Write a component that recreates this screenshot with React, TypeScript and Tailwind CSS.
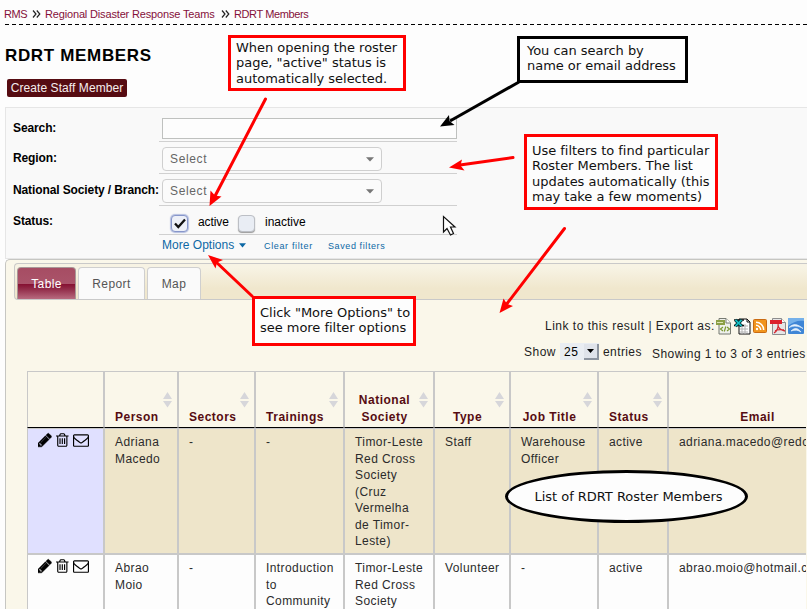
import React from 'react';

type Column = { title: string; width: string };

const columns: Column[] = [
  { title: 'Person', width: 'w-[74px]' },
  { title: 'Sectors', width: 'w-[77px]' },
  { title: 'Trainings', width: 'w-[89px]' },
  { title: 'National Society', width: 'w-[90px]' },
  { title: 'Type', width: 'w-[76px]' },
  { title: 'Job Title', width: 'w-[88px]' },
  { title: 'Status', width: 'w-[70px]' },
  { title: 'Email', width: 'w-[188px]' },
];

const rows: string[][] = [
  ['Adriana Macedo', '-', '-', 'Timor-Leste Red Cross Society (Cruz Vermelha de Timor-Leste)', 'Staff', 'Warehouse Officer', 'active', 'adriana.macedo@redcross.tl'],
  ['Abrao Moio', '-', 'Introduction to Community', 'Timor-Leste Red Cross Society', 'Volunteer', '-', 'active', 'abrao.moio@hotmail.com'],
];

function RowActions() {
  return (
    <div className="flex h-4 items-center gap-[4.5px] pl-px">
      <svg className="h-4 w-[13.7px]" viewBox="128 0 1536 1792">
        <path stroke="#000" strokeWidth="50" d="M491 1536l91-91-235-235-91 91v107h128v128h107zm523-928q0-22-22-22-10 0-17 7l-542 542q-7 7-7 17 0 22 22 22 10 0 17-7l542-542q7-7 7-17zm-54-192l416 416-832 832h-416v-416zm683 96q0 53-37 90l-166 166-416-416 166-165q36-38 90-38 53 0 91 38l235 234q37 39 37 91z" />
      </svg>
      <svg className="h-4 w-[12.6px]" viewBox="192 0 1408 1792">
        <path d="M704 736v576q0 14-9 23t-23 9h-64q-14 0-23-9t-9-23v-576q0-14 9-23t23-9h64q14 0 23 9t9 23zm256 0v576q0 14-9 23t-23 9h-64q-14 0-23-9t-9-23v-576q0-14 9-23t23-9h64q14 0 23 9t9 23zm256 0v576q0 14-9 23t-23 9h-64q-14 0-23-9t-9-23v-576q0-14 9-23t23-9h64q14 0 23 9t9 23zm128 724v-948h-896v948q0 22 7 40.5t14.5 27 10.5 8.5h832q3 0 10.5-8.5t14.5-27 7-40.5zm-672-1076h448l-48-117q-7-9-17-11h-317q-10 2-17 11zm928 32v64q0 14-9 23t-23 9h-96v948q0 83-47 143.5t-113 60.5h-832q-66 0-113-58.5t-47-141.5v-952h-96q-14 0-23-9t-9-23v-64q0-14 9-23t23-9h309l70-167q15-37 54-63t79-26h320q40 0 79 26t54 63l70 167h309q14 0 23 9t9 23z" />
      </svg>
      <svg className="h-4 w-4" viewBox="0 0 1792 1792">
        <path d="M1664 1504v-768q-32 36-69 66-268 206-426 338-51 43-83 67t-86.5 48.5-102.5 24.5h-2q-48 0-102.5-24.5t-86.5-48.5-83-67q-158-132-426-338-37-30-69-66v768q0 13 9.5 22.5t22.5 9.5h1472q13 0 22.5-9.5t9.5-22.5zm0-1051v-24.5l-.5-13-3-12.5-5.5-9-9-7.5-14-2.5h-1472q-13 0-22.5 9.5t-9.5 22.5q0 168 147 284 193 152 401 317 6 5 35 29.5t46 37.5 44.5 31.5 50.5 27.5 43 9h2q20 0 43-9t50.5-27.5 44.5-31.5 46-37.5 35-29.5q208-165 401-317 54-43 100.5-115.5t46.5-131.5zm128-37v1088q0 66-47 113t-113 47h-1472q-66 0-113-47t-47-113v-1088q0-66 47-113t113-47h1472q66 0 113 47t47 113z" />
      </svg>
    </div>
  );
}

function SortArrows() {
  return (
    <svg className="absolute right-[5px] top-[20px] h-4 w-[9px]" viewBox="0 0 9 16" fill="#d6d6da">
      <path d="M4.500 0L9 7H0zM0 9h9L4.500 15.500z" />
    </svg>
  );
}

function Breadcrumb() {
  return (
    <nav className="ml-[5px] flex h-[25px] items-start text-[11px] leading-[14px] text-[#85103a]">
      <span className="-ml-px mt-[7px] w-[28px] tracking-[-0.4px]">RMS</span>
      <Chevrons />
      <span className="ml-[4px] mt-[7px] w-[176px] whitespace-nowrap tracking-[-0.16px]">Regional Disaster Response Teams</span>
      <Chevrons />
      <span className="ml-[4px] mt-[7px] whitespace-nowrap tracking-[-0.4px]">RDRT Members</span>
    </nav>
  );
}

function Chevrons() {
  return (
    <svg className="mt-[10px] h-[8px] w-[9px] shrink-0" viewBox="0 0 9 8" fill="none" stroke="#222" strokeWidth="1.200">
      <path d="M1 .5L4 4 1 7.500M4.800 .5L7.800 4 4.800 7.500" />
    </svg>
  );
}

function Field({ label, height, labelTop, children }: { label: string; height: string; labelTop: string; children: React.ReactNode }) {
  return (
    <div className={`flex ${height}`}>
      <div className={`w-[153px] shrink-0 whitespace-nowrap pl-[7px] text-[12px] font-bold leading-4 tracking-[-0.11px] text-black ${labelTop}`}>{label}</div>
      <div className="w-[298px] border-b border-[#d0d0d0] pl-[3px]">{children}</div>
    </div>
  );
}

function SelectBox() {
  return (
    <div className="mt-[5px] flex h-[24px] w-[220px] items-center justify-between rounded-[4px] border border-[#cfcfcf] bg-[#fbfbfb] pl-[7px] pr-[7px] text-[12px] tracking-[0.65px] text-[#666]">
      <span>Select</span>
      <svg className="h-[5px] w-[8px]" viewBox="0 0 8 5" fill="#777"><path d="M0 .3h8L4 4.500z" /></svg>
    </div>
  );
}

function Filters() {
  return (
    <section className="ml-[5px] flex h-[152px] flex-col border border-r-0 border-[#e6e6e6] bg-[#f9f9f9]">
      <Field label="Search:" height="h-[34px]" labelTop="pt-[12px]">
        <div className="mt-[10px] h-[21px] w-[295px] border border-[#bfc1bf] bg-[#fdfdfd]" />
      </Field>
      <Field label="Region:" height="h-[32px]" labelTop="pt-[8px]"><SelectBox /></Field>
      <Field label="National Society / Branch:" height="h-[32px]" labelTop="pt-[8px]"><SelectBox /></Field>
      <Field label="Status:" height="h-[29px]" labelTop="pt-[7px]">
        <div className="flex text-[12px] leading-4 text-black">
          <span className="ml-[9px] mt-[9px] flex h-[17px] w-[17px] items-center justify-center rounded-[4px] border border-[#8796ca] bg-[#edf0f8] shadow-[0_0_1px_1px_#b4bedf]">
            <svg className="h-[11px] w-[12px]" viewBox="0 0 12 11" fill="none" stroke="#111" strokeWidth="2.300"><path d="M1 5.500L4.300 9 11 1.500" /></svg>
          </span>
          <span className="ml-[10px] mt-[8px] w-[40px] tracking-[-0.1px]">active</span>
          <span className="mt-[9px] h-[17px] w-[17px] rounded-[4px] border border-[#bcbfc5] bg-[#e9edf4] shadow-[0_1px_1px_#999]" />
          <span className="ml-[10px] mt-[8px]">inactive</span>
        </div>
      </Field>
      <div className="ml-[156px] flex h-[23px] items-start pt-[2px] text-[#0d68a5]">
        <span className="w-[77px] whitespace-nowrap text-[12px] leading-4 tracking-[0.02px]">More Options</span>
        <svg className="mt-[6px] h-[5px] w-[7px]" viewBox="0 0 7 5" fill="#0d68a5"><path d="M0 .3h7L3.500 4.500z" /></svg>
        <span className="ml-[18px] mt-px w-[64px] whitespace-nowrap text-[9px] leading-4 tracking-[0.65px]">Clear filter</span>
        <span className="mt-px whitespace-nowrap text-[9px] leading-4 tracking-[0.6px]">Saved filters</span>
      </div>
    </section>
  );
}

function ExportIcons() {
  return (
    <div className="flex items-center gap-[2px]">
      <svg className="h-[17px] w-4" viewBox="0 0 16 17">
        <path d="M3 .5h7l4.500 4.500v11H3z" fill="#eef0ea" stroke="#777b72" />
        <path d="M10 .5V5h4.500" fill="#fff" stroke="#777b72" />
        <rect x="0" y="2" width="9" height="5" fill="#8b9f45" /><path d="M1 4.500h6" stroke="#dce3b4" />
        <path d="M7 9l-2.500 2L7 13M11 9l2.500 2-2.500 2M9.800 8.500l-1.500 5" fill="none" stroke="#7b9832" strokeWidth="1.200" />
      </svg>
      <svg className="h-[17px] w-[17px]" viewBox="0 0 17 17">
        <path d="M5 1h8l3 3v12H5z" fill="#fff" stroke="#111" /><path d="M13 1v3h3" fill="none" stroke="#111" />
        <path d="M6 8h8M6 11h8M6 14h8M8 6v10M11 6v10" stroke="#b3b3b3" />
        <path d="M0 2h10M0 7.500h10" stroke="#111" strokeWidth="1.500" />
        <path d="M1.500 2l6 6M7.500 2l-6 6" stroke="#073c40" strokeWidth="3.200" /><path d="M1.500 2l6 6M7.500 2l-6 6" stroke="#16c4c8" strokeWidth="1.600" />
      </svg>
      <svg className="h-[14px] w-[14px]" viewBox="0 0 14 14">
        <rect x=".5" y=".5" width="13" height="13" rx="1" fill="#f1951d" stroke="#c96b12" />
        <circle cx="4" cy="10" r="1.200" fill="#fff" /><path d="M3 6.300a4.700 4.700 0 0 1 4.700 4.700M3 3.300a7.700 7.700 0 0 1 7.700 7.700" fill="none" stroke="#fff" strokeWidth="1.500" />
      </svg>
      <svg className="ml-[1px] h-[17px] w-4" viewBox="0 0 16 17">
        <path d="M2.500.5h9l4 4v12h-13z" fill="#e6e6e6" stroke="#8d8d8d" /><path d="M11.500 .5v4h4" fill="#fff" stroke="#8d8d8d" />
        <rect x="0" y="2" width="12" height="4" fill="#dc202b" />
        <path d="M8 6c1 3-1 7-4 9M8 7c0 3 3 5 7 6M5 12.500c3-1 6-1 9-.5" fill="none" stroke="#d52931" strokeWidth="1.300" />
      </svg>
      <svg className="h-4 w-4" viewBox="0 0 16 16">
        <rect width="16" height="16" rx="1" fill="#3f86d6" /><path d="M0 0h16v3C10 2 5 4 0 8z" fill="#75b1ea" />
        <path d="M1 9.500c4-4 8-4 14 1-5-3-9-3-14-1zM3 13c4-4 7-3 10 1-3-2-6-2.500-10-1z" fill="#e5f1fc" stroke="#e5f1fc" strokeWidth=".7" />
      </svg>
    </div>
  );
}

function Results() {
  return (
    <main className="ml-[5px] h-[350px] overflow-hidden rounded-tl-[5px] border-l border-t border-[#c6c6c2] bg-[#faf7ea]">
      <div className="ml-[8px] mt-[3px] flex h-[37px] items-end gap-[2px] rounded-l-[4px] border border-r-0 border-[#c9c9c9] bg-linear-to-b from-[#f7f3e4] from-10% to-[#f0e7cd] to-70% pl-[2px] text-[12px] tracking-[0.4px] text-[#555]">
        <div className="flex h-[32px] w-[59px] items-center justify-center rounded-t-[4px] border border-b-0 border-[#a99798] text-white [background-image:linear-gradient(#a64d63_0%,#aa536a_50%,#850e30_51%,#94304c_70%,#b86b7f_100%)]">Table</div>
        <div className="flex h-[32px] w-[67px] items-center justify-center rounded-t-[4px] border border-b-0 border-[#cfcfcf] bg-[#fafafa]">Report</div>
        <div className="flex h-[32px] w-[54px] items-center justify-center rounded-t-[4px] border border-b-0 border-[#cfcfcf] bg-[#fafafa]">Map</div>
      </div>
      <div className="mt-[17px] flex h-[18px] items-center justify-end pr-[3px] text-[12px] text-[#222]">
        <span className="w-[171px] whitespace-nowrap tracking-[0.5px]">Link to this result | Export as:</span>
        <ExportIcons />
      </div>
      <div className="mt-[8px] flex h-[20px] items-start text-[12px] leading-4 tracking-[0.5px] text-[#222]">
        <span className="ml-[518px] mt-px w-[36px]">Show</span>
        <span className="flex h-[17px] w-[39px] items-center justify-between bg-[#e9edf2] pl-[4px] text-black">
          25
          <span className="flex h-[16px] w-[15px] items-center justify-center border-b-2 border-r-2 border-[#8d95a0] bg-[#dfe3ea]">
            <svg className="h-[4px] w-[7px]" viewBox="0 0 7 4"><path d="M0 0h7L3.500 4z" /></svg>
          </span>
        </span>
        <span className="ml-[4px] mt-px w-[49px] tracking-[0.4px]">entries</span>
        <span className="mt-[3px] whitespace-nowrap tracking-[0.43px]">Showing 1 to 3 of 3 entries</span>
      </div>
      <div className="ml-[21px] mt-[8px] w-[779px] overflow-hidden">
        <table className="w-[829px] table-fixed border-separate border-spacing-0 text-[12px] leading-[16.5px] tracking-[0.42px] text-[#2b2b2b]">
          <thead>
            <tr className="h-[57px]">
              <th className="w-[77px] border border-[#c8c8c8] border-b-black" />
              {columns.map((column) => (
                <th key={column.title} className={`relative border border-[#c8c8c8] border-b-black pb-[2px] pl-[10px] pr-[19px] text-center align-bottom font-bold tracking-[0.5px] text-[#560c12] ${column.width}`}>
                  {column.title}
                  <SortArrows />
                </th>
              ))}
            </tr>
          </thead>
          <tbody>
            {rows.map((row, i) => (
              <tr key={row[0]} className={i === 0 ? 'h-[126px] bg-[#eee5ca]' : 'h-[126px] bg-[#fdfdfd]'}>
                <td className={`border border-[#c8c8c8] pl-[9px] pt-[3px] align-top ${i === 0 ? 'bg-[#e0e0ff]' : ''}`}><RowActions /></td>
                {row.map((value, j) => (
                  <td key={j} className="border border-[#c8c8c8] pl-[10px] pr-[8px] pt-[5px] align-top">{value}</td>
                ))}
              </tr>
            ))}
          </tbody>
        </table>
      </div>
    </main>
  );
}

function Annotations() {
  return (
    <div className="pointer-events-none absolute inset-0 text-[13px] leading-[15.400px] tracking-[-0.03px] text-[#111] [font-family:'DejaVu_Sans',sans-serif]">
      <svg className="absolute inset-0 h-[609px] w-[807px]" viewBox="0 0 807 609">
        <path d="M5 24.500H807" stroke="#000" strokeDasharray="4 3" />
        <g stroke="#f00" strokeWidth="3" strokeLinecap="round">
          <path d="M265.500 99L214 198M513 157.500L460 165M252 296L215 261M564.500 228.500L506 305" />
        </g>
        <path d="M519 82L450 121" stroke="#000" strokeWidth="3" />
        <g fill="#f00">
          <path d="M209.500 206l1-15.500 4.500 5 6.500 1z" />
          <path d="M449 167.500l13-8-1.500 6 4 5z" />
          <path d="M208 255l15 5-6 2.500-1.500 6z" />
          <path d="M499.500 313l4-14.500 3.500 5.500 6 2z" />
        </g>
        <path d="M440 126.500l9-11.500.5 6 5 4z" fill="#000" />
        <path d="M443.500 216.500v15.500l3.500-3.500 3.500 6.500 3-1.500-3-6.500h4.500z" fill="#fff" stroke="#111" strokeWidth="1.200" />
      </svg>
      <div className="absolute left-[228px] top-[35px] h-[56px] w-[178px] whitespace-nowrap border-[3px] border-[#f00] bg-[#fdfdfd] pl-[5px] pt-[2px]">
        When opening the roster<br />page, "active" status is<br />automatically selected.
      </div>
      <div className="absolute left-[517px] top-[36px] h-[47px] w-[171px] whitespace-nowrap border-[3px] border-black bg-[#fdfdfd] pl-[7px] pt-[4px]">
        You can search by<br />name or email address
      </div>
      <div className="absolute left-[524px] top-[134px] h-[76px] w-[194px] whitespace-nowrap border-[3px] border-[#f00] bg-[#fdfdfd] pl-[5px] pt-[6px]">
        Use filters to find particular<br />Roster Members. The list<br />updates automatically (this<br />may take a few moments)
      </div>
      <div className="absolute left-[252px] top-[296px] h-[50px] w-[164px] whitespace-nowrap border-[3px] border-[#f00] bg-[#fdfdfd] pl-[5px] pt-[6px]">
        Click "More Options" to<br />see more filter options
      </div>
      <div className="absolute left-[505px] top-[470px] flex h-[53px] w-[243px] items-center justify-center whitespace-nowrap rounded-[50%] border-[3px] border-black bg-[#fdfdfd] pl-[4px]">
        List of RDRT Roster Members
      </div>
    </div>
  );
}

export default function App() {
  return (
    <div className="relative h-[609px] w-[807px] overflow-hidden bg-[#fdfdfd] [font-family:'Liberation_Sans',Arial,sans-serif]">
      <Breadcrumb />
      <h1 className="ml-[5px] mt-[20px] h-[22px] text-[17px] font-bold leading-[22px] tracking-[0.66px] text-black">RDRT MEMBERS</h1>
      <button className="mb-[10px] ml-[7px] mt-[12px] block h-[18px] w-[120px] whitespace-nowrap rounded-[2px] bg-[#560c12] text-center text-[12px] leading-[18px] tracking-[0.08px] text-[#f5eeee]">Create Staff Member</button>
      <Filters />
      <Results />
      <Annotations />
    </div>
  );
}
